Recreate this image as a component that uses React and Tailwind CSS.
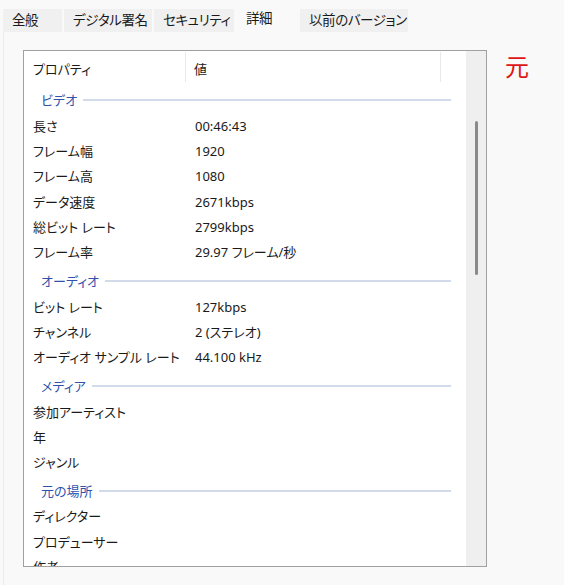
const tabs = [
  { label: "全般", w: "w-[59px]" },
  { label: "デジタル署名", w: "w-[88px]" },
  { label: "セキュリティ", w: "w-[80px]" },
  { label: "詳細", w: "w-[62px]", active: true },
  { label: "以前のバージョン", w: "w-[108px]" },
];

const sections = [
  {
    title: "ビデオ",
    rows: [
      ["長さ", "00:46:43"],
      ["フレーム幅", "1920"],
      ["フレーム高", "1080"],
      ["データ速度", "2671kbps"],
      ["総ビット レート", "2799kbps"],
      ["フレーム率", "29.97 フレーム/秒"],
    ],
  },
  {
    title: "オーディオ",
    rows: [
      ["ビット レート", "127kbps"],
      ["チャンネル", "2 (ステレオ)"],
      ["オーディオ サンプル レート", "44.100 kHz"],
    ],
  },
  {
    title: "メディア",
    rows: [
      ["参加アーティスト", ""],
      ["年", ""],
      ["ジャンル", ""],
    ],
  },
  {
    title: "元の場所",
    rows: [
      ["ディレクター", ""],
      ["プロデューサー", ""],
      ["作者", ""],
    ],
  },
];

function Tab({ tab }) {
  if (tab.active) {
    return (
      <div className={`${tab.w} h-[27px] bg-[#f9f9f9] pl-[10px] pt-[3px] text-[13.5px] tracking-[-0.4px] text-[#1a1a1a] whitespace-nowrap`}>
        {tab.label}
      </div>
    );
  }
  return (
    <div className={`${tab.w} h-[23px] bg-[#f0f0f0] flex items-center pl-[9px] text-[13.5px] tracking-[-0.4px] text-[#1a1a1a] whitespace-nowrap overflow-hidden`}>
      {tab.label}
    </div>
  );
}

function GroupHeader({ title }) {
  return (
    <div className="h-[29px] flex items-center pl-[17px] pr-[15px] pt-[3px]">
      <span className="text-[13px] text-[#2f52ad]">{title}</span>
      <div className="flex-1 h-[2px] bg-[#d3dbea] ml-[6px] -mt-[2px]" />
    </div>
  );
}

function Row({ label, value }) {
  return (
    <div className="h-[25.3px] flex items-center text-[13px] text-[#1a1a1a]">
      <div className="w-[171px] pl-[9px] whitespace-nowrap">{label}</div>
      <div className="whitespace-nowrap">{value}</div>
    </div>
  );
}

export default function App() {
  return (
    <div className="w-[564px] h-[585px] overflow-hidden bg-[#f9f9f9] font-['Noto_Sans','Noto_Sans_CJK_JP',sans-serif] [font-feature-settings:'palt']">
      {/* Tabs */}
      <div className="h-[32px] flex items-end gap-[2px] pl-[3px]">
        {tabs.map((t) => (
          <Tab key={t.label} tab={t} />
        ))}
      </div>

      {/* Page */}
      <div className="ml-[3px] h-[553px] border-l border-[#ececec] pl-[19px] pt-[18px]">
        <div className="flex items-start">
          <div className="w-[464px] h-[517px] border border-[#a0a0a0] bg-white flex overflow-hidden">
            <div className="flex-1 overflow-hidden">
              {/* Column header */}
              <div className="h-[34px] flex text-[13px] text-[#1a1a1a]">
                <div className="w-[162px] pl-[9px] pt-[8px] border-r border-[#e8e8e8] mt-[1px] mb-[3px]">
                  プロパティ
                </div>
                <div className="w-[255px] pl-[8px] pt-[8px] border-r border-[#e8e8e8] mt-[1px] mb-[3px]">
                  値
                </div>
              </div>
              {sections.map((s) => (
                <div key={s.title}>
                  <GroupHeader title={s.title} />
                  {s.rows.map(([l, v]) => (
                    <Row key={l} label={l} value={v} />
                  ))}
                </div>
              ))}
            </div>
            {/* Scrollbar */}
            <div className="w-[20px] bg-[#efefef] flex justify-center">
              <div className="w-[3px] h-[154px] mt-[70px] bg-[#8a8a8a] rounded-full" />
            </div>
          </div>
          <div className="ml-[18px] mt-[5px] text-[24px] leading-none text-[#e01515]">元</div>
        </div>
        <div className="mt-[15px] pl-[8px] text-[13px] text-[#2a5bd0] whitespace-nowrap">詳細情報</div>
      </div>
    </div>
  );
}
